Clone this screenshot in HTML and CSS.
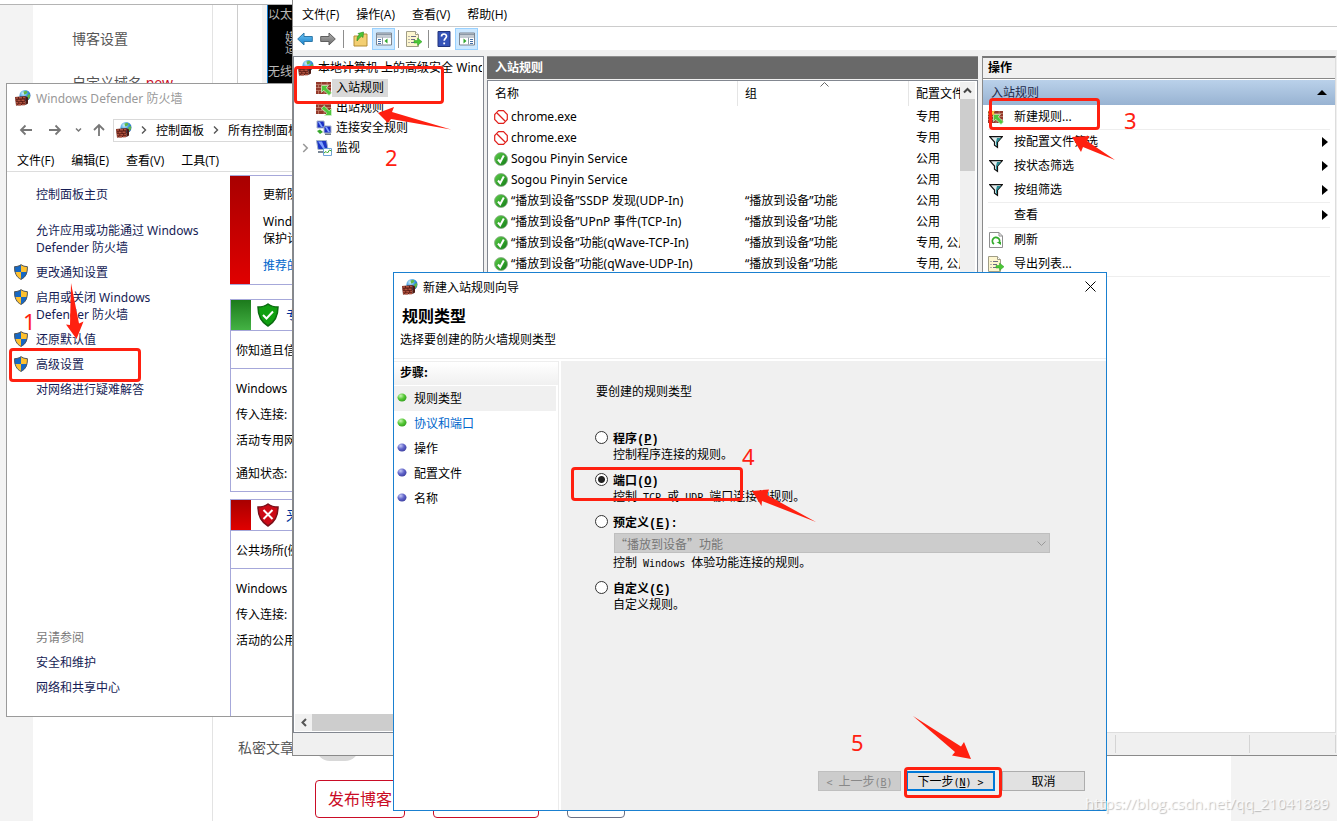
FILE: index.html
```html
<!DOCTYPE html>
<html lang="zh-CN">
<head>
<meta charset="utf-8">
<title>新建入站规则向导</title>
<link rel="stylesheet" href="styles.css">
</head>
<body>
<svg class="defs" aria-hidden="true">
  <defs>
    <radialGradient id="gGlobe" cx=".35" cy=".3" r=".8"><stop offset="0" stop-color="#d4f4ff"/><stop offset=".5" stop-color="#3d9be0"/><stop offset="1" stop-color="#1450a8"/></radialGradient>
    <linearGradient id="gGreen" x1="0" y1="0" x2="1" y2="1"><stop offset="0" stop-color="#5fd04a"/><stop offset="1" stop-color="#0f7a14"/></linearGradient>
    <linearGradient id="gBlue" x1="0" y1="0" x2="0" y2="1"><stop offset="0" stop-color="#6fc4f2"/><stop offset="1" stop-color="#1580cc"/></linearGradient>
    <linearGradient id="gGrey" x1="0" y1="0" x2="0" y2="1"><stop offset="0" stop-color="#b0b0b0"/><stop offset="1" stop-color="#6c6c6c"/></linearGradient>
    <radialGradient id="gDotG" cx=".35" cy=".3" r=".8"><stop offset="0" stop-color="#c9f5b5"/><stop offset=".5" stop-color="#55c835"/><stop offset="1" stop-color="#2f9a1c"/></radialGradient>
    <radialGradient id="gDotB" cx=".35" cy=".3" r=".8"><stop offset="0" stop-color="#c4c8f5"/><stop offset=".5" stop-color="#5f62c8"/><stop offset="1" stop-color="#3a3c9c"/></radialGradient>
    <symbol id="wall" viewBox="0 0 16 16">
      <circle cx="10" cy="5.500" r="5.500" fill="url(#gGlobe)"/>
      <path d="M8.500 1.500l3-.7 1 1.700-1.500 1.500-2 .5zM12.500 5l2.500-1v3l-2 2.500-1-2z" fill="#5fb848"/>
      <path d="M0 7l10.500-1v9L1 15.500z" fill="#5f1e16"/>
      <path d="M.5 8h2.500M4 7.800h3M8 7.500h2.500M.5 10.500h1M2.500 10.500h3M6.500 10.300h3M1 12.700h2.300M4.300 12.700h2.900M8.200 12.500h2.300M1.200 14.800h1M3.200 14.800h2.800M7 14.600h3" stroke="#b0523f" stroke-width="1.400"/>
      <path d="M10.500 6l2.500 1.500v6l-2.500 1.500z" fill="#4b1a14"/>
    </symbol>
    <symbol id="brick" viewBox="0 0 16 16">
      <path d="M0 2h15v12H0z" fill="#c58a78"/>
      <path d="M0 2h5v2.300H0zM5.700 2h5v2.300h-5zM11.500 2H15v2.300h-3.500zM0 5h2v2.300H0zM2.700 5h5v2.300h-5zM8.500 5H15v2.300H8.500zM0 8h5v2.300H0zM5.700 8h5v2.300h-5zM11.500 8H15v2.300h-3.500zM0 11h2v3H0zM2.700 11h5v3h-5zM8.500 11H15v3H8.500z" fill="#94392b"/>
    </symbol>
    <symbol id="inbound" viewBox="0 0 16 16">
      <use href="#brick"/>
      <path d="M5.500 5.500h7l-2.300 2.300 5.300 5-2.500 2.700-5.200-5.200-2.300 2.200z" fill="#4fc63d" stroke="#d9f7cf" stroke-width=".7"/>
    </symbol>
    <symbol id="outbound" viewBox="0 0 16 16">
      <use href="#brick"/>
      <path d="M15.500 15.500h-7l2.300-2.300-5.300-4.700L8 5.700l5.200 5.100 2.300-2.300z" fill="#4fc63d" stroke="#d9f7cf" stroke-width=".7"/>
    </symbol>
    <symbol id="newrule" viewBox="0 0 16 16">
      <use href="#inbound"/>
      <path d="M3.500 0l1 2.400L7 1.500 5.800 4 7 6 4.500 5.500 3.500 8l-1-2.500L0 6l1.200-2L0 1.500l2.500.9z" fill="#ffc83a"/>
    </symbol>
    <symbol id="pcs" viewBox="0 0 16 16">
      <path d="M1 1h7l1 7H1z" fill="#1b2fc4" stroke="#a9b6c8"/><path d="M2 2h2l3 5H5z" fill="#7ea0ff"/>
      <path d="M8 6h7v7H8z" fill="#1b2fc4" stroke="#a9b6c8"/><path d="M9 7h2l3 5h-2z" fill="#7ea0ff"/>
      <path d="M9 13.500h6V15H9z" fill="#6b7684"/><path d="M1 11l3-1.500 3 2.500-3 2z" fill="#38a82e"/>
    </symbol>
    <symbol id="monitor" viewBox="0 0 16 16">
      <path d="M.5.500h10l1.500 9H2z" fill="#1b35c4" stroke="#9fb0c4"/><path d="M2 1.500h4l3 7H7z" fill="#7ea0ff"/>
      <path d="M2 11h5v2H2z" fill="#7a8796"/><path d="M7.500 8.500h8v7h-8z" fill="#fff" stroke="#6fa4d8"/>
      <path d="M8 13l2-1.500 1.500 1.500 2-3 2 1" fill="none" stroke="#34a82a"/>
    </symbol>
    <symbol id="uac" viewBox="0 0 14 16">
      <path d="M7 .5Q9.500 2.500 13.500 2.600C13.700 9 11.500 13.500 7 15.500 2.500 13.500.3 9 .5 2.600 4.500 2.500 7 .5 7 .5z" fill="#ffc12e"/>
      <path d="M7 .5V8H.8C.5 6.500.4 4.500.5 2.600 4.500 2.500 7 .5 7 .5zM7 8h6.200c-.7 3.300-2.700 6.200-6.200 7.500z" fill="#1668c4"/>
      <path d="M7 .7Q9.500 2.600 13.400 2.700C13.600 9 11.400 13.400 7 15.400 2.600 13.400.4 9 .6 2.700 4.500 2.600 7 .7 7 .7z" fill="none" stroke="#4f5660"/>
    </symbol>
    <symbol id="check" viewBox="0 0 14 14"><circle cx="7" cy="7" r="6.500" fill="url(#gGreen)" stroke="#8ba889" stroke-width=".8"/><path d="M4 7.500l2.200 2.700L9.800 3.500" fill="none" stroke="#fff" stroke-width="2"/></symbol>
    <symbol id="block" viewBox="0 0 14 14"><path d="M4.500.7h5l3.800 3.800v5l-3.800 3.800h-5L.7 9.500v-5z" fill="#fff" stroke="#e0201c" stroke-width="1.200"/><path d="M3 3l8 8" stroke="#e0201c" stroke-width="1.200"/></symbol>
    <symbol id="filter" viewBox="0 0 14 12"><path d="M.7.700h12.600L8.500 6v5.300l-3-2V6z" fill="#e4eeee" stroke="#111" stroke-width="1.200"/><path d="M8 2h4L8 6.200v4l-1-.6V6z" fill="#2a8c94"/></symbol>
    <symbol id="refresh" viewBox="0 0 14 16"><path d="M.5.500h9.500l3.500 3.500v11.500H.5z" fill="#fff" stroke="#8f8f8f"/><path d="M10 .5V4h3.500" fill="none" stroke="#8f8f8f"/><path d="M5 12a3.600 3.600 0 1 1 5-1" fill="none" stroke="#32ab2b" stroke-width="1.800"/><path d="M7.500 10H12v3z" fill="#32ab2b"/></symbol>
    <symbol id="export" viewBox="0 0 16 16"><path d="M.5.500h9l3 3v12H.5z" fill="#fdf6cf" stroke="#a09d86"/><path d="M9.500.5v3h3" fill="#fff" stroke="#a09d86"/><path d="M2.500 5.500h1m1.500 0h5M2.500 8.500h1m1.500 0h4M2.500 11.500h1m1.500 0h3" stroke="#6c6c85"/><path d="M8 9.500h3.500V7L16 10.700l-4.500 3.800V12H8z" fill="#4cc736" stroke="#2a9a22" stroke-width=".5"/></symbol>
    <symbol id="back" viewBox="0 0 16 14"><path d="M.7 7L7 1v3.500h8.300v5H7V13z" fill="url(#gBlue)" stroke="#2f78a8"/></symbol>
    <symbol id="fwd" viewBox="0 0 16 14"><path d="M15.300 7L9 1v3.500H.7v5H9V13z" fill="url(#gGrey)" stroke="#5f5f5f"/></symbol>
    <symbol id="folder" viewBox="0 0 16 16"><path d="M1 5h6l1-2h6v12H1z" fill="#f3cf72" stroke="#b58e35"/><path d="M4 10c0-3 0-5 2.500-6L5 2.500 10.500 1 10 6.500 8.500 5.300C6.500 6.500 6 8 4 10z" fill="#4cc736" stroke="#25851d" stroke-width=".6"/></symbol>
    <symbol id="treepane" viewBox="0 0 16 13"><path d="M.5.500h15v12H.5z" fill="#fff" stroke="#7d858f"/><path d="M1 1h14v2H1z" fill="#8b98a6"/><path d="M.5 4.500h15M6.500 5v7" stroke="#8b98a6"/><path d="M2 7h3M2 9h3M2 11h3" stroke="#4470a8"/><path d="M11.500 6v5L8.500 8.500z" fill="#2fa82a"/></symbol>
    <symbol id="actpane" viewBox="0 0 16 13"><path d="M.5.500h15v12H.5z" fill="#fff" stroke="#7d858f"/><path d="M1 1h14v2H1z" fill="#8b98a6"/><path d="M.5 4.500h15M9.500 5v7" stroke="#8b98a6"/><path d="M11 7h3M11 9h3M11 11h3" stroke="#4470a8"/><path d="M4.500 6v5l3-2.500z" fill="#2fa82a"/></symbol>
    <symbol id="help" viewBox="0 0 13 16"><path d="M.5.500h12v15H.5z" fill="#3553b8" stroke="#22357c"/><path d="M4 5.500c0-3.300 5-3.300 5-.2 0 2-2.300 2-2.300 4.400" fill="none" stroke="#fff" stroke-width="1.700"/><path d="M5.800 11.500h1.800v1.800H5.800z" fill="#fff"/></symbol>
    <symbol id="shieldok" viewBox="0 0 22 24"><path d="M11 1q4 3 10 3c0 9-3 15-10 19C4 19 1 13 1 4q6 0 10-3z" fill="#10a010" stroke="#0b6b10" stroke-width="1.500"/><path d="M6 12l3.500 3.500L16 8.500" fill="none" stroke="#fff" stroke-width="2"/></symbol>
    <symbol id="shieldbad" viewBox="0 0 22 24"><path d="M11 1q4 3 10 3c0 9-3 15-10 19C4 19 1 13 1 4q6 0 10-3z" fill="#cc0a16" stroke="#78101a" stroke-width="1.500"/><path d="M6.500 7l9 9m0-9l-9 9" stroke="#fff" stroke-width="2"/></symbol>
    <symbol id="chev" viewBox="0 0 8 8"><path d="M2 .5L5.500 4 2 7.500" fill="none" stroke="currentColor" stroke-width="1.400"/></symbol>
    <symbol id="tri" viewBox="0 0 6 10"><path d="M0 0l6 5-6 5z" fill="#000"/></symbol>
  </defs>
</svg>

<div class="desktop">
  <section class="blog">
    <div class="blog-gutter"></div>
    <nav class="blog-nav">
      <a href="#">博客设置</a>
      <a href="#">自定义域名 <em>new</em></a>
    </nav>
    <div class="blog-main">
      <label class="private">私密文章 <span class="toggle"></span></label>
      <div class="blog-buttons">
        <button class="pub">发布博客</button>
        <button class="pub wide" aria-label="保存"></button>
        <button class="pub grey" aria-label="返回"></button>
      </div>
    </div>
    <div class="blog-gutter end"></div>
  </section>

  <section class="console">
    <div class="term"><p>以太</p><p class="in">媒<br>适</p><p>无线</p></div>
  </section>

  <section class="defender">
    <header class="d-title"><svg class="i16"><use href="#wall"/></svg>Windows Defender 防火墙</header>
    <div class="d-nav">
      <svg class="navarrows" viewBox="0 0 90 14" fill="none" stroke="#777" stroke-width="1.800"><path d="M13 7H2M6.500 2.500L2 7l4.500 4.500M30 7h11M36.500 2.500L41 7l-4.500 4.500"/><path d="M57 5.500L59.500 8 62 5.500" stroke-width="1.500"/><path d="M80 13V2M75 7l5-5 5 5"/></svg>
      <div class="address"><svg class="i16"><use href="#wall"/></svg><svg class="i8"><use href="#chev"/></svg><span>控制面板</span><svg class="i8"><use href="#chev"/></svg><span>所有控制面板项</span></div>
    </div>
    <nav class="d-menu"><button>文件(F)</button><button>编辑(E)</button><button>查看(V)</button><button>工具(T)</button></nav>
    <div class="d-body">
      <aside class="d-side">
        <a class="first" href="#">控制面板主页</a>
        <a href="#">允许应用或功能通过 Windows Defender 防火墙</a>
        <a href="#"><svg class="uac"><use href="#uac"/></svg>更改通知设置</a>
        <a href="#"><svg class="uac"><use href="#uac"/></svg>启用或关闭 Windows Defender 防火墙</a>
        <a href="#"><svg class="uac"><use href="#uac"/></svg>还原默认值</a>
        <a href="#"><svg class="uac"><use href="#uac"/></svg>高级设置</a>
        <a href="#">对网络进行疑难解答</a>
        <span class="see">另请参阅</span>
        <a href="#">安全和维护</a>
        <a href="#">网络和共享中心</a>
      </aside>
      <div class="d-main">
        <div class="update"><p>更新防火墙设置</p><p>Windows<br>保护计算机</p><a href="#">推荐的设置</a></div>
        <div class="profile">
          <div class="p-head ok"><svg class="shield"><use href="#shieldok"/></svg>专用网络</div>
          <p class="p-desc">你知道且信任的网络</p>
          <p>Windows</p><p>传入连接:</p><p>活动专用网络:</p><p class="last">通知状态:</p>
        </div>
        <div class="profile open">
          <div class="p-head bad"><svg class="shield"><use href="#shieldbad"/></svg>来宾或公用网络</div>
          <p class="p-desc">公共场所(例如机场)</p>
          <p>Windows</p><p>传入连接:</p><p>活动的公用网络:</p>
        </div>
      </div>
    </div>
  </section>

  <section class="mmc">
    <nav class="m-menu"><button>文件(F)</button><button>操作(A)</button><button>查看(V)</button><button>帮助(H)</button></nav>
    <div class="m-tools">
      <button aria-label="后退"><svg class="i16"><use href="#back"/></svg></button>
      <button aria-label="前进"><svg class="i16"><use href="#fwd"/></svg></button>
      <i class="wide"></i>
      <button aria-label="上一级"><svg class="i16"><use href="#folder"/></svg></button>
      <button class="on" aria-label="显示树"><svg class="i16"><use href="#treepane"/></svg></button>
      <i></i>
      <button aria-label="导出列表"><svg class="i16"><use href="#export"/></svg></button>
      <i></i>
      <button aria-label="帮助"><svg class="i16"><use href="#help"/></svg></button>
      <button class="on" aria-label="显示操作窗格"><svg class="i16"><use href="#actpane"/></svg></button>
    </div>
    <div class="m-body">
      <div class="tree">
        <ul>
          <li class="root"><svg class="i16"><use href="#wall"/></svg><span>本地计算机 上的高级安全 Wind</span></li>
          <li><b></b><svg class="i16"><use href="#inbound"/></svg><span class="sel">入站规则</span></li>
          <li><b></b><svg class="i16"><use href="#outbound"/></svg><span>出站规则</span></li>
          <li><b></b><svg class="i16"><use href="#pcs"/></svg><span>连接安全规则</span></li>
          <li><b><svg class="i8 big"><use href="#chev"/></svg></b><svg class="i16"><use href="#monitor"/></svg><span>监视</span></li>
        </ul>
        <div class="hscroll"><svg viewBox="0 0 18 17"><path d="M11 5L7.500 8.500 11 12" fill="none" stroke="#555" stroke-width="2"/></svg></div>
      </div>
      <div class="rules">
        <h2>入站规则</h2>
        <div class="list">
          <div class="clip">
          <table>
            <colgroup><col class="c1"><col><col class="c3"></colgroup>
            <thead><tr><th>名称</th><th>组<svg class="sort" viewBox="0 0 9 5"><path d="M.5 4.500l4-4 4 4" fill="none" stroke="#666"/></svg></th><th>配置文件</th></tr></thead>
            <tbody>
              <tr><td><span><svg class="i14"><use href="#block"/></svg>chrome.exe</span></td><td></td><td>专用</td></tr>
              <tr><td><span><svg class="i14"><use href="#block"/></svg>chrome.exe</span></td><td></td><td>专用</td></tr>
              <tr><td><span><svg class="i14"><use href="#check"/></svg>Sogou Pinyin Service</span></td><td></td><td>公用</td></tr>
              <tr><td><span><svg class="i14"><use href="#check"/></svg>Sogou Pinyin Service</span></td><td></td><td>公用</td></tr>
              <tr><td><span><svg class="i14"><use href="#check"/></svg>“播放到设备”SSDP 发现(UDP-In)</span></td><td>“播放到设备”功能</td><td>公用</td></tr>
              <tr><td><span><svg class="i14"><use href="#check"/></svg>“播放到设备”UPnP 事件(TCP-In)</span></td><td>“播放到设备”功能</td><td>公用</td></tr>
              <tr><td><span><svg class="i14"><use href="#check"/></svg>“播放到设备”功能(qWave-TCP-In)</span></td><td>“播放到设备”功能</td><td>专用, 公用</td></tr>
              <tr><td><span><svg class="i14"><use href="#check"/></svg>“播放到设备”功能(qWave-UDP-In)</span></td><td>“播放到设备”功能</td><td>专用, 公用</td></tr>
            </tbody>
          </table>
          </div>
          <div class="vscroll"><svg viewBox="0 0 15 17"><path d="M4 10.500L7.500 7l3.500 3.500" fill="none" stroke="#444" stroke-width="2"/></svg><span></span></div>
        </div>
      </div>
      <div class="actions">
        <h2>操作</h2>
        <h3>入站规则<svg viewBox="0 0 10 5"><path d="M0 5l5-5 5 5z"/></svg></h3>
        <div class="group"><button><svg class="i16"><use href="#newrule"/></svg>新建规则...</button></div>
        <div class="group">
          <button><svg class="i14"><use href="#filter"/></svg>按配置文件筛选<svg class="tri"><use href="#tri"/></svg></button>
          <button><svg class="i14"><use href="#filter"/></svg>按状态筛选<svg class="tri"><use href="#tri"/></svg></button>
          <button><svg class="i14"><use href="#filter"/></svg>按组筛选<svg class="tri"><use href="#tri"/></svg></button>
        </div>
        <div class="group"><button class="noicon">查看<svg class="tri"><use href="#tri"/></svg></button></div>
        <div class="group">
          <button><svg class="i16"><use href="#refresh"/></svg>刷新</button>
          <button><svg class="i16"><use href="#export"/></svg>导出列表...</button>
        </div>
      </div>
    </div>
    <footer class="m-status"><span></span><span></span><span></span></footer>
  </section>

  <section class="wizard" role="dialog" aria-label="新建入站规则向导">
    <header class="w-title"><svg class="i16"><use href="#wall"/></svg><span>新建入站规则向导</span>
      <button aria-label="关闭"><svg viewBox="0 0 11 11"><path d="M.5.500l10 10m0-10l-10 10" stroke="#000" fill="none"/></svg></button></header>
    <div class="w-head"><h1>规则类型</h1><p>选择要创建的防火墙规则类型</p></div>
    <div class="w-body">
      <nav class="steps">
        <h2>步骤:</h2>
        <ol>
          <li class="cur"><svg viewBox="0 0 10 9"><ellipse cx="5" cy="4.500" rx="4.500" ry="4" fill="url(#gDotG)"/></svg>规则类型</li>
          <li><svg viewBox="0 0 10 9"><ellipse cx="5" cy="4.500" rx="4.500" ry="4" fill="url(#gDotG)"/></svg><a href="#">协议和端口</a></li>
          <li><svg viewBox="0 0 10 9"><ellipse cx="5" cy="4.500" rx="4.500" ry="4" fill="url(#gDotB)"/></svg>操作</li>
          <li><svg viewBox="0 0 10 9"><ellipse cx="5" cy="4.500" rx="4.500" ry="4" fill="url(#gDotB)"/></svg>配置文件</li>
          <li><svg viewBox="0 0 10 9"><ellipse cx="5" cy="4.500" rx="4.500" ry="4" fill="url(#gDotB)"/></svg>名称</li>
        </ol>
      </nav>
      <form class="w-main">
        <p class="ask">要创建的规则类型</p>
        <div class="opts">
          <div class="opt"><input type="radio" name="t" id="o1"><label for="o1">程序<span class="mb">(<u>P</u>)</span></label><p>控制程序连接的规则。</p></div>
          <div class="opt"><input type="radio" name="t" id="o2" checked><label for="o2">端口<span class="mb">(<u>O</u>)</span></label><p>控制<span class="m"> TCP </span>或<span class="m"> UDP </span>端口连接的规则。</p></div>
          <div class="opt"><input type="radio" name="t" id="o3"><label for="o3">预定义<span class="mb">(<u>E</u>):</span></label>
            <div class="combo"><select disabled aria-label="预定义规则"><option>“播放到设备”功能</option></select><svg viewBox="0 0 9 5"><path d="M.5.500l4 4 4-4" fill="none" stroke="#999"/></svg></div>
            <p>控制<span class="m"> Windows </span>体验功能连接的规则。</p></div>
          <div class="opt"><input type="radio" name="t" id="o4"><label for="o4">自定义<span class="mb">(<u>C</u>)</span></label><p>自定义规则。</p></div>
        </div>
        <div class="w-buttons">
          <button type="button" disabled><span class="m">&lt; </span>上一步<span class="m">(<u>B</u>)</span></button>
          <button type="button" class="next">下一步<span class="m">(<u>N</u>) &gt;</span></button>
          <button type="button">取消</button>
        </div>
      </form>
    </div>
  </section>

  <div class="mark k1"></div><div class="mark k2"></div><div class="mark k3"></div><div class="mark k4"></div><div class="mark k5"></div>
  <svg class="arrows" viewBox="0 0 1337 821" aria-hidden="true">
    <path d="M71 283L79 323.500 83.500 321.500 76.500 339 66 324.500 70 325zM378 113L394 107 392 112 451 129.500 391 119 388 123zM1072 137L1089.500 136 1087 141 1115 160 1083 147 1081 152zM752 491L769 489.500 767 495 816 522 762 501 761.500 506zM971 759L964 742 961 746.500 913 716 955 752 952 755.500z"/>
    <text x="23" y="330">1</text><text x="385" y="166">2</text><text x="1124" y="129">3</text><text x="742" y="465">4</text><text x="851" y="751">5</text>
  </svg>
  <div class="watermark">https://blog.csdn.net/qq_21041889</div>
</div>
</body>
</html>
```
FILE: styles.css
```css
* { box-sizing: border-box; }
body { margin: 0; font: 12px/17px "Noto Sans", "Noto Sans CJK SC", sans-serif; color: #000; background: #fff; }
h1, h2, h3, p, ul, ol { margin: 0; padding: 0; }
ul, ol { list-style: none; }
button { border: 0; background: none; font: inherit; color: inherit; padding: 0; }
a { color: inherit; text-decoration: none; }
svg { display: block; flex: none; }
.defs { position: absolute; width: 0; height: 0; }
.i16 { width: 16px; height: 16px; }
.i14 { width: 14px; height: 14px; }
.i8 { width: 8px; height: 8px; color: #555; }
.desktop { position: relative; height: 100vh; overflow: hidden; }

/* blog page behind the windows */
.blog { display: flex; height: 100%; margin-top: 4px; border-top: 1px solid #b4b4b4; font-size: 14px; color: #555; }
.blog-gutter { width: 33px; background: #f3f3f3; }
.blog-gutter.end { width: 106px; }
.blog-nav { width: 180px; padding: 24px 0 0 39px; border-right: 1px solid #e3e3e3; display: flex; flex-direction: column; gap: 24px; line-height: 20px; }
.blog-nav em { font-style: normal; color: #ca0c26; }
.blog-main { flex: 1; display: flex; flex-direction: column; justify-content: flex-end; padding: 0 0 7px 25px; }
.private { display: flex; align-items: center; gap: 22px; height: 32px; margin-bottom: 17px; }
.toggle { width: 43px; height: 28px; border-radius: 14px; background: #d8d8d8; }
.blog-buttons { display: flex; gap: 28px; padding-left: 77px; }
.pub { width: 90px; height: 38px; border: 1px solid #ca0c26; border-radius: 4px; color: #ca0c26; font-size: 16px; background: #fff; }
.pub.wide { width: 106px; }
.pub.grey { width: 58px; border-color: #6b7084; }

.console { position: absolute; left: 237px; top: 5px; width: 60px; height: 90px; border-left: 1px solid #ccc; background: #fff; display: flex; padding-left: 24px; overflow: hidden; }
.term { flex: 1; display: flex; flex-direction: column; gap: 12px; border-left: 1px solid #1b7fd0; outline: 5px solid #f3f3f3; background: #000; color: #b8b8b8; font: 12px/11px "Noto Sans CJK SC", sans-serif; padding-top: 3px; margin-left: 5px; }
.term .in { padding-left: 17px; }

/* control panel window */
.defender { position: absolute; left: 6px; top: 83px; width: 400px; height: 634px; border: 1px solid #9a9a9a; background: #fff; display: flex; flex-direction: column; overflow: hidden; white-space: nowrap; }
.d-title { display: flex; align-items: center; gap: 5px; height: 30px; padding: 0 0 2px 8px; color: #999; }
.d-nav { display: flex; align-items: center; height: 34px; padding: 0 0 2px 12px; gap: 4px; }
.navarrows { width: 90px; height: 14px; }
.address { display: flex; align-items: center; gap: 8px; flex: 1; height: 23px; border: 1px solid #d9d9d9; padding-left: 2px; }
.d-menu { display: flex; gap: 17px; height: 24px; padding: 2px 0 0 10px; border-bottom: 1px solid #ddd; font-family: "Open Sans", "Noto Sans CJK SC", sans-serif; }
.d-body { flex: 1; display: flex; min-height: 0; }
.d-side { width: 223px; display: flex; flex-direction: column; gap: 8px; padding: 14px 24px 20px 29px; color: #151c55; white-space: normal; }
.d-side a { position: relative; }
.d-side .first { margin-bottom: 11px; }
.d-side .uac { position: absolute; left: -22px; top: 0; width: 14px; height: 16px; }
.see { margin-top: auto; color: #7a7a7a; }
.d-main { flex: 1; padding-top: 3px; display: flex; flex-direction: column; }
.update { height: 110px; border: 1px solid #a6a8da; border-left: 0; background: linear-gradient(#a80000, #e00000) left / 20px 100% no-repeat; padding: 10px 0 0 33px; display: flex; flex-direction: column; gap: 10px; margin-bottom: 14px; }
.update a { color: #0066cc; }
.profile { border: 1px solid #a6a8da; height: 193px; margin-bottom: 7px; }
.profile.open { flex: 1; border-bottom: 0; margin: 0; }
.profile p { padding-left: 5px; margin-bottom: 9px; }
.p-head { display: flex; align-items: center; gap: 7px; height: 31px; padding-left: 26px; font-size: 15px; color: #003399; border-bottom: 1px solid #a6a8da; }
.shield { width: 22px; height: 24px; }
.ok { background: linear-gradient(#1c7a1c, #44b244) left / 20px 100% no-repeat; }
.bad { background: linear-gradient(#a80000, #e00000) left / 20px 100% no-repeat; }
.profile .p-desc { height: 38px; padding-top: 11px; margin-bottom: 11px; border-bottom: 1px solid #a6a8da; }
.profile .last { margin-top: 16px; }

/* management console */
.mmc { position: absolute; left: 292px; right: 0; top: 0; bottom: 65px; border: 1px solid #8a8a8a; border-width: 0 0 1px 1px; background: #f0f0f0; display: flex; flex-direction: column; }
.m-menu { display: flex; gap: 17px; height: 27px; padding: 2px 0 0 9px; background: #fff; border-bottom: 1px solid #ccc; font-family: "Open Sans", "Noto Sans CJK SC", sans-serif; }
.m-tools { display: flex; align-items: center; height: 23px; background: #fff; }
.m-tools button { width: 23px; height: 22px; display: grid; place-items: center; }
.m-tools .on { background: #cce8ff; border: 1px solid #99d1ff; }
.m-tools i { width: 1px; height: 18px; background: #8d8d8d; margin: 0 3px; }
.m-tools .wide { margin: 0 5px 0 4px; }
.m-body { flex: 1; display: flex; min-height: 0; padding: 6px 1px 0 0; }
.tree { width: 191px; border: 1px solid #828790; background: #fff; display: flex; flex-direction: column; justify-content: space-between; overflow: hidden; white-space: nowrap; padding: 1px; margin-right: 3px; }
.tree li { display: flex; align-items: center; height: 20px; }
.tree li b { width: 21px; display: flex; justify-content: center; }
.tree li span { padding: 0 4px; line-height: 18px; min-width: 0; overflow: hidden; }
.tree .root { padding-left: 3px; }
.tree .root span { padding-right: 0; }
.tree .sel { background: #d9d9d9; }
.big { width: 9px; height: 10px; color: #999; }
.hscroll { height: 17px; background: linear-gradient(#cdcdcd, #cdcdcd) 17px / 150px 100% no-repeat #f0f0f0; }
.hscroll svg { width: 18px; height: 17px; }
.rules { flex: 1; min-width: 0; display: flex; flex-direction: column; margin-right: 4px; }
.rules h2 { height: 23px; background: #696969; color: #fff; font-size: 12px; line-height: 22px; padding-left: 8px; margin-bottom: 1px; border-top: 1px solid #8f8f8f; }
.list { flex: 1; display: flex; border: 1px solid #828790; background: #fff; padding: 0 2px 0 0; }
.clip { flex: 1; min-width: 0; overflow: hidden; }
table { width: 100%; table-layout: fixed; border-collapse: collapse; }
.c1 { width: 250px; }
.c3 { width: 51px; }
th, td { padding: 0 0 0 7px; font-weight: 400; text-align: left; white-space: nowrap; overflow: hidden; position: relative; }
th { height: 25px; background: linear-gradient(#e5e5e5, #e5e5e5) right / 1px 100% no-repeat; }
th:last-child { background: none; }
.sort { position: absolute; left: 48%; top: 1px; width: 9px; height: 5px; }
td { height: 21px; }
td:first-child { padding-left: 6px; }
td span { display: flex; align-items: center; gap: 3px; }
.vscroll { width: 15px; background: #f0f0f0; margin-top: 1px; }
.vscroll svg { width: 15px; height: 17px; }
.vscroll span { display: block; height: 72px; background: #cdcdcd; }
.actions { width: 354px; border: 1px solid #8a8a8a; border-top: 2px solid #777; border-right-color: #ddd; border-bottom-color: #ddd; background: #fff; }
.actions h2 { font-size: 12px; line-height: 20px; height: 21px; padding-left: 5px; background: #f0f0f0; border-bottom: 1px solid #888; }
.actions h3 { display: flex; align-items: center; justify-content: space-between; font-weight: 400; font-size: 12px; height: 25px; padding: 0 8px; background: linear-gradient(#bad1ea, #98b3d2); color: #1d2b4c; margin-top: 1px; }
.actions h3 svg { width: 10px; height: 5px; }
.group { margin: 0 5px; border-bottom: 1px solid #eee; }
.group button { display: flex; align-items: center; width: 100%; height: 24px; padding-bottom: 1px; text-align: left; }
.group .i16 { margin-right: 10px; }
.group .i14 { margin: 0 11px 0 1px; }
.group .noicon { padding-left: 26px; }
.tri { width: 6px; height: 10px; margin: 0 2px 0 auto; }
.m-status { display: flex; justify-content: flex-end; height: 22px; padding: 2px 1px; }
.m-status span { border-left: 1px solid #d4d4d4; width: 134px; }
.m-status span:nth-child(2) { width: 86px; }
.m-status span:nth-child(3) { width: 1px; }

/* wizard dialog */
.wizard { position: absolute; left: 393px; top: 272px; width: 714px; height: 539px; border: 1px solid #1a80d0; background: #fff; display: flex; flex-direction: column; font-family: "Noto Sans CJK SC", sans-serif; }
.w-title { display: flex; align-items: center; gap: 5px; height: 29px; padding: 0 10px 2px 8px; }
.w-title button { margin-left: auto; }
.w-title button svg { width: 11px; height: 11px; }
.w-head { height: 57px; padding: 1px 6px; border-bottom: 1px solid #ececec; }
.w-head h1 { font-size: 16px; line-height: 24px; padding-left: 2px; }
.w-head p { line-height: 24px; }
.w-body { flex: 1; display: flex; gap: 2px; padding-top: 2px; }
.steps { width: 165px; border-right: 1px solid #ececec; }
.steps h2 { font-size: 12px; height: 24px; line-height: 20px; padding-left: 6px; background: linear-gradient(#fff, #f0f0f0); border-top: 1px solid #eee; margin-bottom: 1px; }
.steps li { display: flex; align-items: center; gap: 7px; height: 25px; padding: 0 0 2px 3px; margin-right: 2px; }
.steps svg { width: 10px; height: 9px; }
.steps .cur { background: #f0f0f0; }
.steps a { color: #0066cc; }
.w-main { flex: 1; background: #f0f0f0; display: flex; flex-direction: column; padding: 21px 21px 19px 34px; }
.ask { padding-left: 1px; margin-bottom: 32px; }
.opts { display: flex; flex-direction: column; gap: 11px; }
.opt { display: grid; grid-template-columns: 13px 1fr; column-gap: 5px; }
.opt input { appearance: none; width: 13px; height: 13px; margin: 0; border: 1px solid #333; border-radius: 50%; background: #fff; }
.opt input:checked { background: radial-gradient(#222 0 3px, #fff 4px); }
.opt label { font-weight: 700; line-height: 14px; }
.opt p, .combo { grid-column: 2; }
.combo { position: relative; margin: 4px 35px 0 1px; }
.combo select { appearance: none; display: block; width: 100%; height: 20px; border: 1px solid #bfbfbf; border-radius: 0; background: #ccc; color: #777; font: inherit; padding: 0; opacity: 1; }
.combo svg { position: absolute; right: 4px; top: 8px; width: 9px; height: 5px; }
.m, .mb { line-height: 0; }
.m { font-family: "DejaVu Sans Mono", monospace; font-size: 10px; white-space: pre; }
.mb { font-family: "Liberation Mono", monospace; }
.w-buttons { margin-top: auto; display: flex; justify-content: flex-end; }
.w-buttons button { width: 83px; height: 20px; border: 1px solid #adadad; background: #e1e1e1; line-height: 18px; }
.w-buttons button:disabled { background: #ccc; border-color: #bfbfbf; color: #888; }
.w-buttons .next { width: 89px; margin: 0 7px 0 5px; border: 2px solid #0078d7; line-height: 16px; }

/* tutorial annotations */
.mark { position: absolute; border: 3px solid #ff2010; border-radius: 4px; }
.k1 { left: 9px; top: 348px; width: 132px; height: 34px; }
.k2 { left: 294px; top: 66px; width: 150px; height: 38px; }
.k3 { left: 989px; top: 98px; width: 111px; height: 32px; }
.k4 { left: 571px; top: 467px; width: 172px; height: 34px; }
.k5 { left: 904px; top: 767px; width: 98px; height: 31px; }
.arrows { position: absolute; left: 0; top: 0; width: 1337px; height: 821px; fill: #ff2010; font-size: 22px; pointer-events: none; }
.watermark { position: absolute; right: 8px; bottom: 8px; font: 15px/20px "Open Sans", sans-serif; color: rgba(255, 255, 255, .8); text-shadow: 1px 1px 1px rgba(0, 0, 0, .25); }
```
